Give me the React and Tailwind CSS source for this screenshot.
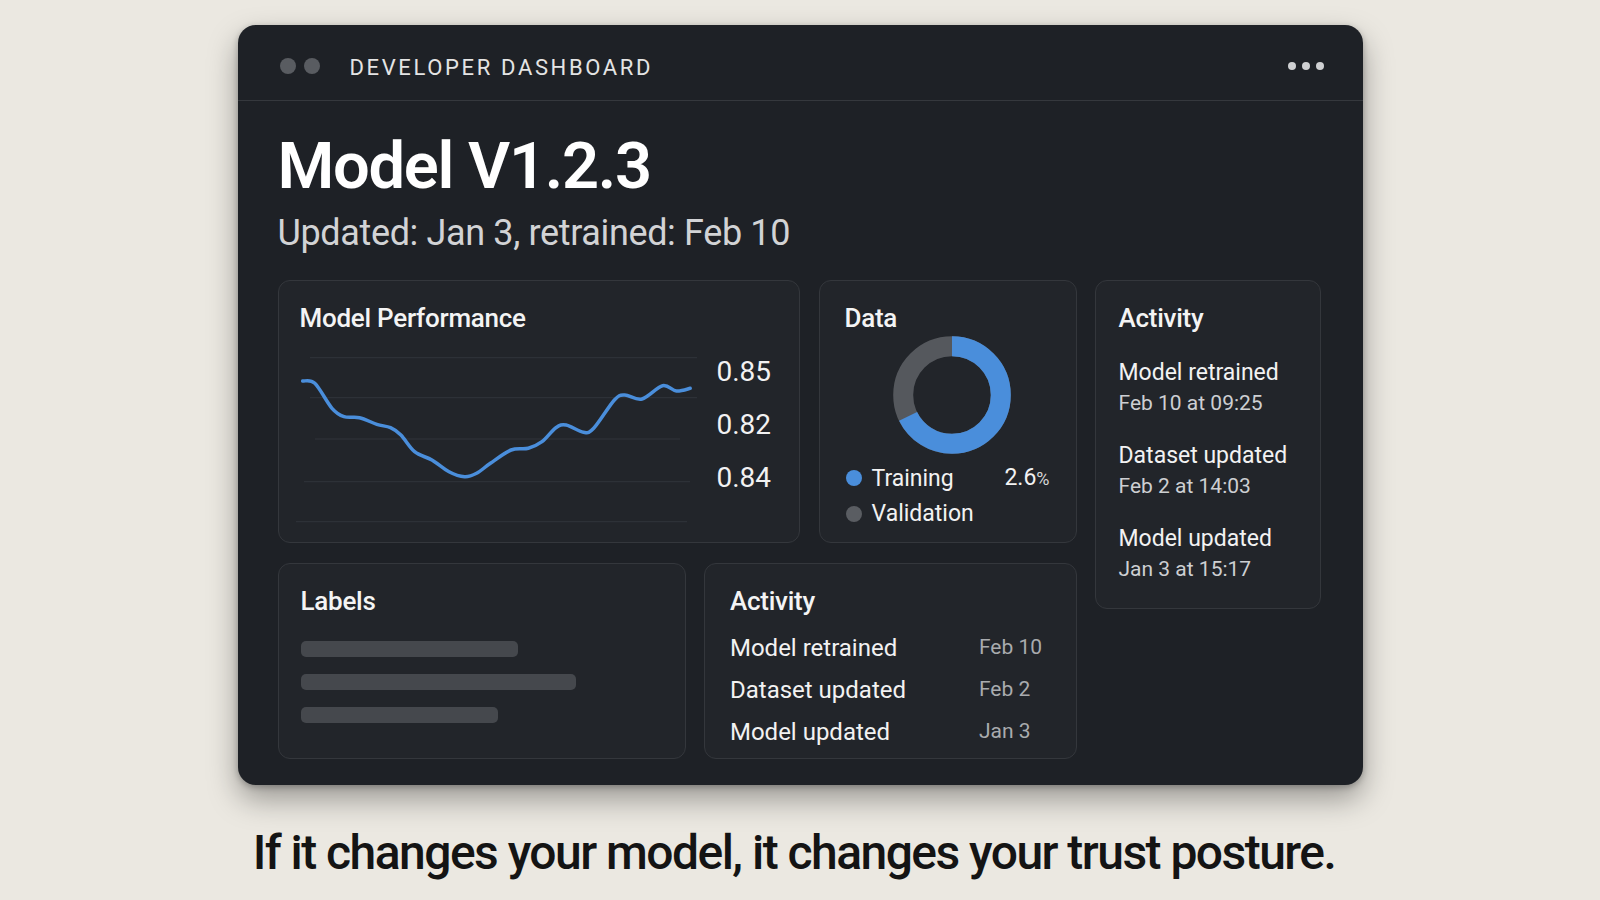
import React from "react";

const FONT = { fontFamily: "Roboto, 'Noto Sans', sans-serif" };

const linePts = [
  [302.7, 381], [314.8, 383.3], [332, 408.3], [344, 416.7], [359.5, 417.7],
  [376.8, 424.3], [390.5, 427.7], [400.9, 435], [414.6, 451.7], [431.9, 460],
  [449, 471.7], [464.6, 476.7], [476.6, 473.3], [490.4, 463.3], [511.1, 450],
  [528.3, 448.3], [542, 441.7], [555.9, 427.7], [566.2, 425], [583.4, 432.3],
  [593.7, 428.3], [614.4, 400], [624.7, 395], [642, 399], [662.6, 385.7],
  [676.4, 391], [690.2, 388.3],
];

function smoothPath(pts) {
  let d = `M ${pts[0][0]} ${pts[0][1]}`;
  for (let i = 0; i < pts.length - 1; i++) {
    const p0 = pts[i - 1] || pts[i];
    const p1 = pts[i];
    const p2 = pts[i + 1];
    const p3 = pts[i + 2] || p2;
    const c1x = p1[0] + (p2[0] - p0[0]) / 6;
    const c1y = p1[1] + (p2[1] - p0[1]) / 6;
    const c2x = p2[0] - (p3[0] - p1[0]) / 6;
    const c2y = p2[1] - (p3[1] - p1[1]) / 6;
    d += ` C ${c1x.toFixed(1)} ${c1y.toFixed(1)}, ${c2x.toFixed(1)} ${c2y.toFixed(1)}, ${p2[0]} ${p2[1]}`;
  }
  return d;
}

function Card({ className = "", children }) {
  return (
    <div className={`rounded-[12px] border border-[#34373c] bg-[#22252a] ${className}`}>
      {children}
    </div>
  );
}

function CardTitle({ children }) {
  return (
    <div className="text-[26px] leading-[30px] font-medium text-[#f4f4f4] tracking-[-0.01em]">
      {children}
    </div>
  );
}

function PerformanceCard() {
  const grid = [
    [310, 697, 357.7],
    [310, 697, 397.7],
    [315, 680, 439],
    [304, 690, 481.7],
    [296, 687, 521.7],
  ];
  return (
    <Card className="w-[522px] h-[263px] pl-[21px] pt-[22px]">
      <CardTitle>Model Performance</CardTitle>
      <div className="flex items-start mt-[17px]">
        <svg
          width="404"
          height="180"
          viewBox="296 350 404 180"
          className="ml-[-4px] shrink-0"
        >
          {grid.map(([x1, x2, y], i) => (
            <line key={i} x1={x1} x2={x2} y1={y} y2={y} stroke="#30343a" strokeWidth="1" />
          ))}
          <path
            d={smoothPath(linePts)}
            fill="none"
            stroke="#4a8edb"
            strokeWidth="3.5"
            strokeLinecap="round"
            strokeLinejoin="round"
          />
        </svg>
        <div className="ml-[17px] mt-[-5px] flex flex-col text-[28px] leading-[53px] text-[#f2f2f2]">
          <span>0.85</span>
          <span>0.82</span>
          <span>0.84</span>
        </div>
      </div>
    </Card>
  );
}

function DataCard() {
  const r = 48.8;
  const c = 2 * Math.PI * r;
  const blue = c * (243.7 / 360);
  return (
    <Card className="w-[258px] h-[263px] pl-[25px] pr-[26px] pt-[22px]">
      <CardTitle>Data</CardTitle>
      <svg width="118" height="118" viewBox="0 0 118 118" className="ml-[48px] mt-[3px]">
        <circle cx="59" cy="59" r={r} fill="none" stroke="#55585d" strokeWidth="20" />
        <circle
          cx="59"
          cy="59"
          r={r}
          fill="none"
          stroke="#4a8edb"
          strokeWidth="20"
          strokeDasharray={`${blue} ${c}`}
          transform="rotate(-90 59 59)"
        />
      </svg>
      <div className="mt-[6px] flex flex-col text-[23px] leading-[35px] text-[#f2f2f2]">
        <div className="flex items-center">
          <span className="ml-[1px] w-[16px] h-[16px] rounded-full bg-[#4a8edb]" />
          <span className="ml-[10px]">Training</span>
          <span className="ml-auto">
            2.6<span className="text-[18px] text-[#d8d8d8]">%</span>
          </span>
        </div>
        <div className="flex items-center">
          <span className="ml-[1px] w-[16px] h-[16px] rounded-full bg-[#5a5d62]" />
          <span className="ml-[10px]">Validation</span>
        </div>
      </div>
    </Card>
  );
}

function LabelsCard() {
  return (
    <Card className="w-[409px] h-[196px] pl-[22px] pt-[22px]">
      <CardTitle>Labels</CardTitle>
      <div className="mt-[25px] flex flex-col gap-[17px]">
        <div className="h-[16px] w-[217px] rounded-[5px] bg-[#45484d]" />
        <div className="h-[16px] w-[275px] rounded-[5px] bg-[#45484d]" />
        <div className="h-[16px] w-[197px] rounded-[5px] bg-[#45484d]" />
      </div>
    </Card>
  );
}

function ActivityTableCard() {
  const rows = [
    ["Model retrained", "Feb 10"],
    ["Dataset updated", "Feb 2"],
    ["Model updated", "Jan 3"],
  ];
  return (
    <Card className="w-[373px] h-[196px] pl-[25px] pt-[22px]">
      <CardTitle>Activity</CardTitle>
      <div className="mt-[11px] flex flex-col">
        {rows.map(([a, b]) => (
          <div key={a} className="flex items-center h-[42px]">
            <span className="w-[249px] text-[24px] text-[#f2f2f2]">{a}</span>
            <span className="text-[21px] text-[#a9abae]">{b}</span>
          </div>
        ))}
      </div>
    </Card>
  );
}

function ActivityListCard() {
  const items = [
    ["Model retrained", "Feb 10 at 09:25"],
    ["Dataset updated", "Feb 2 at 14:03"],
    ["Model updated", "Jan 3 at 15:17"],
  ];
  return (
    <Card className="w-[226px] h-[329px] pl-[23px] pt-[22px]">
      <CardTitle>Activity</CardTitle>
      <div className="mt-[25px] flex flex-col gap-[23px]">
        {items.map(([a, b]) => (
          <div key={a} className="flex flex-col">
            <span className="text-[23px] leading-[30px] text-[#f2f2f2]">{a}</span>
            <span className="text-[21px] leading-[30px] text-[#cdcfd2]">{b}</span>
          </div>
        ))}
      </div>
    </Card>
  );
}

export default function App() {
  return (
    <div
      className="w-full min-h-screen bg-[#ebe8e1] flex flex-col items-center overflow-hidden"
      style={FONT}
    >
      <div className="mt-[25px] w-[1125px] h-[760px] shrink-0 rounded-[18px] bg-[#1e2126] shadow-[0_14px_30px_rgba(0,0,0,0.35),0_2px_6px_rgba(0,0,0,0.25)] flex flex-col">
        {/* header */}
        <div className="h-[76px] shrink-0 flex items-center pt-[6px] pl-[42px] pr-[39px] border-b border-[#35383d]">
          <div className="flex gap-[8px]">
            <span className="w-[16px] h-[16px] rounded-full bg-[#595c61]" />
            <span className="w-[16px] h-[16px] rounded-full bg-[#595c61]" />
          </div>
          <div className="ml-[30px] mt-[4px] text-[22px] tracking-[0.12em] text-[#e4e4e4]">
            DEVELOPER DASHBOARD
          </div>
          <div className="ml-auto flex gap-[6px]">
            <span className="w-[8px] h-[8px] rounded-full bg-[#cfd0d2]" />
            <span className="w-[8px] h-[8px] rounded-full bg-[#cfd0d2]" />
            <span className="w-[8px] h-[8px] rounded-full bg-[#cfd0d2]" />
          </div>
        </div>

        {/* body */}
        <div className="pl-[40px] pr-[42px] pt-[31px]">
          <h1 className="text-[65px] leading-[68px] font-semibold tracking-[-0.02em] text-white">
            Model V1.2.3
          </h1>
          <p className="mt-[13px] text-[36px] leading-[40px] tracking-[-0.01em] text-[#d2d3d5]">
            Updated: Jan 3, retrained: Feb 10
          </p>

          <div className="mt-[27px] flex items-start gap-[18px]">
            <div className="w-[799px] flex flex-col gap-[20px]">
              <div className="flex gap-[19px]">
                <PerformanceCard />
                <DataCard />
              </div>
              <div className="flex gap-[18px]">
                <LabelsCard />
                <ActivityTableCard />
              </div>
            </div>
            <ActivityListCard />
          </div>
        </div>
      </div>

      <div className="mt-[40px] mr-[12px] text-[48px] leading-[56px] font-medium tracking-[-0.032em] text-[#141414]">
        If it changes your model, it changes your trust posture.
      </div>
    </div>
  );
}
